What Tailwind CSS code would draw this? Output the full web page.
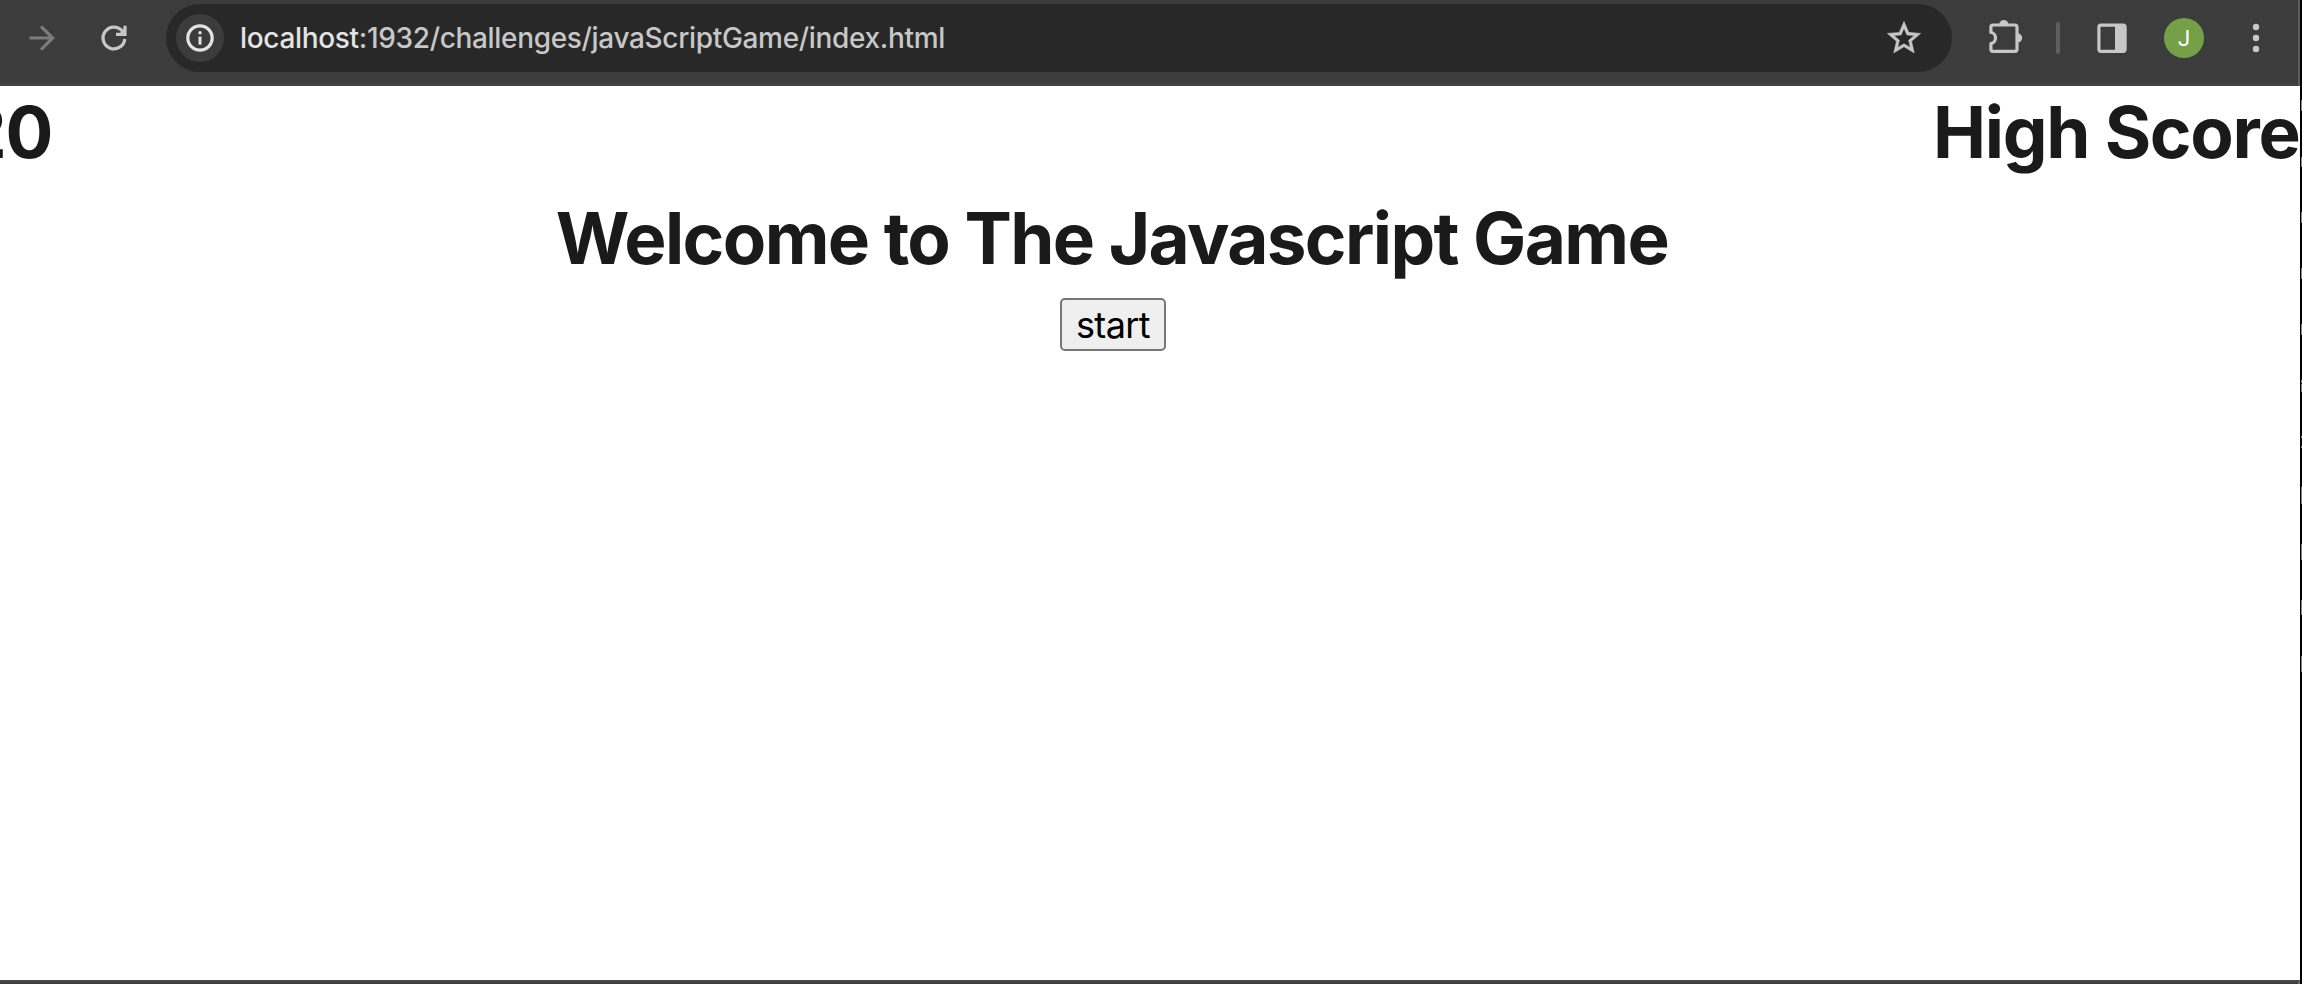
<!DOCTYPE html>
<html lang="en">
<head>
<meta charset="utf-8">
<title>Javascript Game</title>
<script src="https://cdn.jsdelivr.net/npm/@tailwindcss/browser@4"></script>
</head>
<body class="w-[2302px] h-[984px] overflow-hidden flex bg-black font-['Inter',sans-serif]">
<div class="w-[2300px] h-full shrink-0 flex flex-col bg-white">
  <!-- browser toolbar -->
  <header class="h-[86px] shrink-0 bg-[#3c3c3c] border-b-2 border-b-[#454343] border-r-2 border-r-[#5e5e5e]">
    <div class="h-[76px] pl-[22px] flex items-center">
      <svg class="size-10 shrink-0" viewBox="0 0 40 40" fill="none" stroke="#7b7b7b" stroke-width="3.2"><path d="M7.5 20H30M19 8.3L30.7 20L19 31.700"/></svg>
      <svg class="size-10 shrink-0 ml-8" viewBox="0 0 40 40" fill="none" stroke="#c7c7c7" stroke-width="3.2"><path d="M30.8 21A10.900 10.900 0 1 1 28.500 13.200M31 7.700V18M22 16.400H32.600"/><path d="M25.500 15.500L30 11v5z" fill="#c7c7c7" stroke="none"/></svg>
      <div class="ml-8 w-[1786px] h-[68px] shrink-0 rounded-full bg-[#282828] flex items-center pl-[10px] pr-7">
        <div class="size-12 rounded-full bg-[#3c3c3c] shrink-0">
          <svg class="size-12" viewBox="0 0 48 48" fill="none"><circle cx="24" cy="24" r="12.200" stroke="#e3e3e3" stroke-width="3.200"/><circle cx="24" cy="18.700" r="1.700" fill="#e3e3e3"/><path d="M22.500 22.600h3v8h-3z" fill="#e3e3e3"/></svg>
        </div>
        <div class="ml-4 text-[28px] leading-[34px] font-medium tracking-[-0.33px] text-[#c7c7c7] whitespace-nowrap"><span class="text-[#e3e3e3]">localhost</span>:1932/challenges/javaScriptGame/index.html</div>
        <svg class="size-10 shrink-0 ml-auto" viewBox="0 0 24 24" fill="#c7c7c7" stroke="#c7c7c7" stroke-width="0.3"><path d="M22 9.240l-7.190-.620L12 2 9.190 8.630 2 9.240l5.460 4.730L5.820 21 12 17.270 18.180 21l-1.630-7.030L22 9.240zM12 15.400l-3.760 2.270 1-4.280-3.320-2.880 4.380-.380L12 6.100l1.710 4.040 4.380.380-3.320 2.880 1 4.280L12 15.400z"/></svg>
      </div>
      <svg class="size-10 shrink-0 ml-[34px]" viewBox="0 0 40 40" fill="none" stroke="#c7c7c7" stroke-width="3.200"><path d="M4.900 14.500V9q0-2 2-2H29q2 0 2 2V31.300q0 2-2 2H6.900q-2 0-2-2V25.500C11 25 11 15 4.900 14.500z" stroke-linejoin="round"/><path d="M13.200 6.500a4.600 4.600 0 0 1 9.200 0zM31.500 15.300a4.700 4.700 0 0 1 0 9.400z" fill="#c7c7c7" stroke="none"/></svg>
      <div class="ml-[30px] w-1 h-8 rounded-full bg-[#5f5f5f] shrink-0"></div>
      <svg class="size-10 shrink-0 ml-8" viewBox="0 0 40 40" fill="none"><rect x="6.900" y="7.100" width="26.200" height="26.200" rx="2" stroke="#c7c7c7" stroke-width="3.200"/><path d="M23 7h10v26H23z" fill="#c7c7c7"/></svg>
      <div class="ml-8 size-10 shrink-0 rounded-full bg-[#75a048] text-white font-['Roboto',sans-serif] text-[22px] leading-[41px] text-center">J</div>
      <svg class="size-10 shrink-0 ml-8" viewBox="0 0 40 40" fill="#c7c7c7"><circle cx="20" cy="9" r="3.200"/><circle cx="20" cy="20" r="3.200"/><circle cx="20" cy="31" r="3.200"/></svg>
    </div>
  </header>
  <!-- page -->
  <main class="flex-1 pt-[6px] text-[#1a1a1a]">
    <div class="flex justify-between text-[71px] leading-[80px] font-bold tracking-[-1.3px] h-20 whitespace-nowrap">
      <div class="w-[52px] flex justify-end overflow-hidden"><span>20</span></div>
      <div class="w-[367px]">High Score</div>
    </div>
    <h1 class="mt-[26px] w-[2224px] text-center text-[71px] leading-[80px] font-bold tracking-[-1.63px]">Welcome to The Javascript Game</h1>
    <div class="mt-5 w-[2226px] flex justify-center">
      <button class="w-[106px] h-[53px] border-2 border-[#767676] rounded-[5px] bg-[#efefef] text-black text-[36px] leading-[50px] tracking-[-0.6px] text-center">start</button>
    </div>
  </main>
  <footer class="h-1 shrink-0 bg-[#3c3c3c] border-t-2 border-t-[#4a4848] border-r-2 border-r-[#6b6b6b]"></footer>
</div>
<!-- neighbouring window showing at the edge -->
<aside class="w-[2px] h-full shrink-0">
  <svg class="w-[2px] h-[984px]" viewBox="0 0 2 984" fill="#858585"><path d="M1 100h1v11H1zM1 157h1v10H1zM1 212h1v11H1zM1 268h1v11H1zM1 324h1v11H1zM1 380h1v3H1zM1 384h1v8H1zM1 436h1v2H1zM1 446h1v2H1zM1 487h1v17H1zM1 544h1v16H1zM1 600h1v15H1zM1 656h1v16H1z"/></svg>
</aside>
</body>
</html>
